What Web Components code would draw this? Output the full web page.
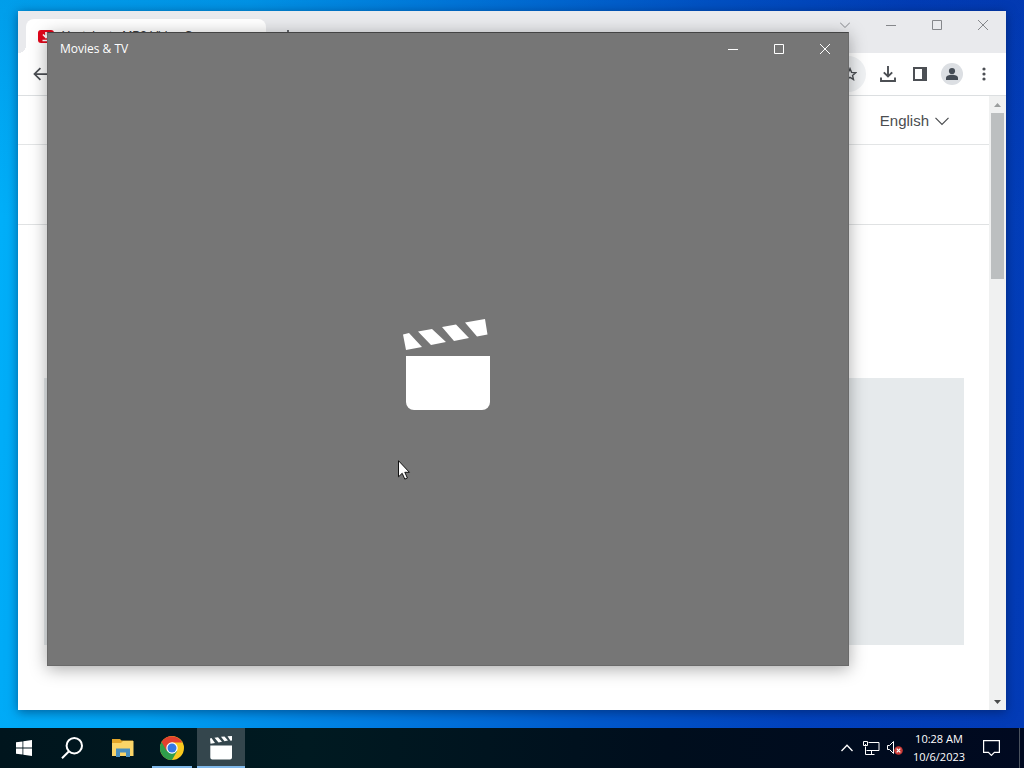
<!DOCTYPE html>
<html lang="en">
<head>
<meta charset="utf-8">
<title>Desktop</title>
<style>
  html, body { height: 100%; margin: 0; }
  body { font-family: "Open Sans", "Noto Sans", sans-serif; font-size: 11px; overflow: hidden; }
</style>
</head>
<body>
<desk-top>
  <browser-window slot="window" tab-title="Youtube to MP3 Video Conver">
    <site-page language="English"></site-page>
  </browser-window>
  <app-window slot="window" label="Movies &amp; TV"></app-window>
  <mouse-pointer slot="window"></mouse-pointer>
  <task-bar slot="bar" time="10:28 AM" date="10/6/2023"></task-bar>
</desk-top>

<script>
const define = (name, render) => customElements.define(name, class extends HTMLElement {
  connectedCallback() {
    if (this.shadowRoot) return;
    const tpl = document.createElement('template');
    tpl.innerHTML = `<style>
      *, *::before, *::after { box-sizing: border-box; }
      button { font: inherit; color: inherit; background: none; border: 0; padding: 0; margin: 0;
               display: flex; align-items: center; justify-content: center; }
      svg { display: block; flex: none; }
    </style>` + render(this);
    this.attachShadow({ mode: 'open' }).append(tpl.content.cloneNode(true));
  }
});

define('desk-top', () => `
  <style>
    :host { display: grid; grid-template-rows: 1fr auto; height: 100vh; }
    main { position: relative; overflow: hidden;
      background: linear-gradient(to bottom, rgba(0,20,120,.12), rgba(0,20,120,0) 30%),
        linear-gradient(99deg, #00b1fa 0%, #00a3f3 22%, #0081e4 40%, #0059cc 62%, #0242bd 80%, #033bb6 100%); }
  </style>
  <main><slot name="window"></slot></main>
  <slot name="bar"></slot>`);

/* Minimize, maximize and close buttons, shared by both windows */
define('caption-buttons', () => `
  <style>
    :host { display: flex; height: 28px; }
    button { width: 46px; height: 100%; }
    path { fill: none; stroke: currentColor; }
  </style>
  <button aria-label="Minimize"><svg width="10" height="10"><path d="M0 5.5h10"/></svg></button>
  <button aria-label="Maximize"><svg width="10" height="10"><path d="M.5.5h9v9H.5z"/></svg></button>
  <button aria-label="Close"><svg width="10" height="10"><path d="M0 0l10 10M10 0 0 10"/></svg></button>`);

define('browser-window', el => `
  <style>
    :host { position: absolute; inset: 11px 18px 18px; display: flex; flex-direction: column;
      background: #fff; box-shadow: 0 2px 10px rgba(0,20,60,.5); }
    header { display: flex; align-items: flex-start; height: 42px; background: #e9eaed; color: #85878b; }
    .tab { position: relative; display: flex; align-items: center; gap: 8px; width: 240px; height: 34px;
      margin: 8px 0 0 8px; padding: 0 12px; border-radius: 8px 8px 0 0; background: #fff; color: #3c4043; }
    .tab::before { content: ""; position: absolute; left: -8px; bottom: 0; width: 8px; height: 8px;
      background: radial-gradient(circle at 0 0, transparent 8px, #fff 8px); }
    .tab span { font: 12px/16px "Liberation Sans", Arial, sans-serif; white-space: nowrap; overflow: hidden; }
    .new { width: 28px; height: 34px; margin: 8px 0 0 8px; color: #45484c; }
    .more { width: 46px; height: 28px; margin-left: auto; }
    nav { display: flex; align-items: center; height: 43px; padding: 0 6px; color: #4c4f54;
      border-bottom: 1px solid #dcdfe1; background: #fff; }
    nav button { width: 32px; height: 32px; }
    .address { flex: 1; display: flex; align-items: center; justify-content: flex-end; height: 36px;
      margin: 0 6px 0 80px; border-radius: 18px; background: #eff1f3; }
    .address input { flex: 1; min-width: 0; border: 0; background: none; outline: 0; }
    .view { flex: 1; min-height: 0; display: flex; }
    ::slotted(site-page) { flex: 1; min-width: 0; }
    .bar { width: 17px; display: flex; flex-direction: column; align-items: center; background: #f0f1f1; }
    .bar button { width: 17px; height: 17px; }
    .thumb { width: 13px; height: 166px; background: #bcbfc0; }
    .bar button:last-child { margin-top: auto; }
  </style>
  <header>
    <div class="tab">
      <svg width="16" height="13" viewBox="0 0 16 13"><rect width="16" height="13" rx="3" fill="#e3061a"/><path d="M8 2v5M5 4.500l3 3 3-3M4.500 10.500h7" fill="none" stroke="#fff" stroke-width="1.700"/></svg>
      <span>${el.getAttribute('tab-title')}</span>
    </div>
    <button class="new" aria-label="New tab"><svg width="12" height="12"><path d="M6 0v12M0 6h12" stroke="currentColor" stroke-width="1.600"/></svg></button>
    <button class="more" aria-label="Search tabs"><svg width="10" height="6"><path d="M0 .5l5 5 5-5" fill="none" stroke="currentColor"/></svg></button>
    <caption-buttons></caption-buttons>
  </header>
  <nav>
    <button aria-label="Back"><svg width="14" height="14" viewBox="0 0 16 16"><path d="M16 8H2M8.500 1.200 1.700 8l6.800 6.800" fill="none" stroke="currentColor" stroke-width="2"/></svg></button>
    <div class="address">
      <input type="text" aria-label="Address">
      <button aria-label="Bookmark"><svg width="14" height="14" viewBox="0 0 16 16"><path d="M8 1.800l1.800 4.300 4.700.4-3.600 3.100 1.100 4.600L8 11.800l-4 2.400 1.100-4.600L1.500 6.500l4.700-.4z" fill="none" stroke="currentColor" stroke-width="1.600"/></svg></button>
    </div>
    <button aria-label="Downloads"><svg width="16" height="16" viewBox="0 0 16 16"><path d="M8 0v10M3.800 6.300 8 10.500l4.200-4.200M1 11.500V15h14v-3.500" fill="none" stroke="currentColor" stroke-width="1.900"/></svg></button>
    <button aria-label="Side panel"><svg width="14" height="14"><path d="M1 1h12v12H1z" fill="none" stroke="currentColor" stroke-width="2"/><path d="M9 1h4v12H9z" fill="currentColor"/></svg></button>
    <button aria-label="Profile"><svg width="22" height="22"><circle cx="11" cy="11" r="11" fill="#dcdfe3"/><circle cx="11" cy="8" r="3.100" fill="#454c55"/><path d="M5 17v-2c0-2.200 3-3.200 6-3.200s6 1 6 3.200v2z" fill="#454c55"/></svg></button>
    <button aria-label="Menu"><svg width="4" height="14" fill="currentColor"><circle cx="2" cy="2" r="1.600"/><circle cx="2" cy="7" r="1.600"/><circle cx="2" cy="12" r="1.600"/></svg></button>
  </nav>
  <div class="view">
    <slot></slot>
    <div class="bar">
      <button aria-label="Scroll up"><svg width="7" height="4"><path d="M0 4 3.500 0 7 4z" fill="#9b9e9e"/></svg></button>
      <div class="thumb"></div>
      <button aria-label="Scroll down"><svg width="7" height="4"><path d="M0 0l3.500 4L7 0z" fill="#4a4c4c"/></svg></button>
    </div>
  </div>`);

define('site-page', el => `
  <style>
    :host { display: block; background: #fff; color: #4b4d50; overflow: hidden; }
    .top { display: flex; align-items: center; justify-content: flex-end; height: 49px;
      padding: 2px 40px 0 0; border-bottom: 1px solid #e3e5e6; }
    .top button { gap: 6px; font: 15px/20px "Liberation Sans", Arial, sans-serif; }
    .head { height: 80px; border-bottom: 1px solid #e0e2e3; }
    .panel { height: 267px; margin: 153px 25px 0 26px; background: #e6eaec; }
  </style>
  <div class="top"><button>${el.getAttribute('language')}
    <svg width="14" height="9"><path d="M.5.8 7 7.500 13.500.8" fill="none" stroke="currentColor" stroke-width="1.200"/></svg></button></div>
  <div class="head"></div>
  <div class="panel"></div>`);

define('app-window', el => `
  <style>
    :host { position: absolute; inset: 32px 175px 62px 47px; display: flex; flex-direction: column;
      background: #767676; color: #fff; border: 1px solid #6a6a6a; border-top-color: #444;
      box-shadow: 0 3px 16px rgba(0,0,0,.34); }
    header { display: flex; justify-content: space-between; align-items: center; height: 32px; padding-left: 12px; }
    h1 { margin: 0; font-size: 12px; line-height: 16px; font-weight: 400; }
    .splash { flex: 1; display: flex; align-items: center; justify-content: center; padding-right: 2px; }
  </style>
  <header><h1>${el.getAttribute('label')}</h1><caption-buttons></caption-buttons></header>
  <div class="splash">
    <svg width="88" height="92" viewBox="0 0 88 92" fill="#fff">
      <path d="M0 15.500 6 14 19 28 3 31zM15 12.500 29 10 43 23 28 26zM39 8 53 5.500 66 19 51 22zM62 3.500 82 0 84.500 15.500 74 17.500z"/>
      <path d="M3 37h84v46a8 8 0 0 1-8 8H11a8 8 0 0 1-8-8z"/>
    </svg>
  </div>`);

define('mouse-pointer', () => `
  <style>:host { position: absolute; left: 398px; top: 460px; pointer-events: none; }</style>
  <svg width="13" height="20"><path d="M.5.700v16.100l3.700-3.500 2.600 5.800 2.600-1.100-2.600-5.700h4.600z" fill="#fff" stroke="#111"/></svg>`);

define('task-bar', el => `
  <style>
    :host { display: flex; height: 40px; color: #fff;
      background: linear-gradient(to right, #00151d, #001a21 30%, #000e1d 65%, #000920); }
    .apps { display: flex; gap: 1px; margin-left: 3px; }
    button { width: 48px; height: 40px; }
    .running, .active { position: relative; }
    .running::after, .active::after { content: ""; position: absolute; left: 4px; right: 4px; bottom: 0; height: 2px; background: #7fb8ea; }
    .active { background: #34464d; }
    .active::after { left: 0; right: 0; }
    .tray { display: flex; margin-left: auto; }
    .tray button { width: 24px; }
    .tray .clock { width: 64px; flex-direction: column; line-height: 18px; font-size: 11px; }
    .tray .notes { width: 40px; }
    .tray .peek { width: 5px; margin-left: 8px; border-left: 1px solid #4a525e; }
    .line { fill: none; stroke: #fff; }
  </style>
  <button aria-label="Start"><svg width="16" height="16" fill="#fff"><path d="M0 2.300 6.500 1.400v6.200H0zM7.300 1.300 16 0v7.600H7.300zM0 8.400h6.500v6.200L0 13.700zM7.300 8.400H16V16l-8.700-1.300z"/></svg></button>
  <button aria-label="Search"><svg width="22" height="22"><path class="line" stroke-width="2" d="M8 14.200 1 21.200M13.300 1a7.700 7.700 0 1 1 0 15.400 7.700 7.700 0 0 1 0-15.400z"/></svg></button>
  <div class="apps">
    <button aria-label="File Explorer"><svg width="22" height="18"><path d="M0 0h8l1.500 1.500H21V17H0z" fill="#e3a62a"/><path d="M0 4h9l2-2h10.500v15H0z" fill="#fbd568"/><path d="M4 18V9.500h14V18h-4v-4.500H8V18z" fill="#4a8fbe"/></svg></button>
    <button class="running" aria-label="Google Chrome"><svg width="24" height="24" viewBox="0 0 24 24"><circle cx="12" cy="12" r="12" fill="#f9c91e"/><path d="M12 12 1.600 6A12 12 0 0 0 12 24l5.200-9z" fill="#2f9e4b"/><path d="M12 12 6.800 15 1.600 6a12 12 0 0 1 20.800 0.600H12z" fill="#e2402f"/><circle cx="12" cy="12" r="5.700" fill="#fff"/><circle cx="12" cy="12" r="4.500" fill="#3478e5"/></svg></button>
    <button class="active" aria-label="Movies &amp; TV"><svg width="24" height="24" fill="#fff"><path d="M1 2.500 2.500 2 6 7l-4.500.7zM5.500 1.700 9 1.200 13 5.700 9.500 6.400zM12 .8 15.500.4 19 4.500 15.500 5.200zM18.500.2 23 0v4.500l-1.500.2zM1.300 9.500h21.700V21.500a2 2 0 0 1-2 2H3.300a2 2 0 0 1-2-2z"/></svg></button>
  </div>
  <div class="tray">
    <button aria-label="Show hidden icons"><svg width="12" height="8"><path class="line" stroke-width="1.300" d="M.5 7 6 1.200 11.500 7"/></svg></button>
    <button aria-label="Network"><svg width="17" height="14"><path class="line" d="M5.500 1.500h10.500v8H3.500M2.500 5.500v8h9M8.500 9.500v4M.5.5h4v4h-4zM2.500 5v-2"/></svg></button>
    <button aria-label="Volume"><svg width="16" height="14"><path class="line" d="M.5 4.500h2l4-4v12l-4-4h-2z"/><circle cx="11.500" cy="9.500" r="4.300" fill="#c93a36"/><path d="M9.700 7.700l3.600 3.600M13.300 7.700l-3.600 3.600" stroke="#fff" stroke-width="1.200"/></svg></button>
    <button class="clock"><span>${el.getAttribute('time')}</span><span>${el.getAttribute('date')}</span></button>
    <button class="notes" aria-label="Notifications"><svg width="17" height="16"><path class="line" stroke-width="1.200" d="M.6.6h15.800v11.800h-5l-3 3-3-3H.6z"/></svg></button>
    <button class="peek" aria-label="Show desktop"></button>
  </div>`);
</script>
</body>
</html>
